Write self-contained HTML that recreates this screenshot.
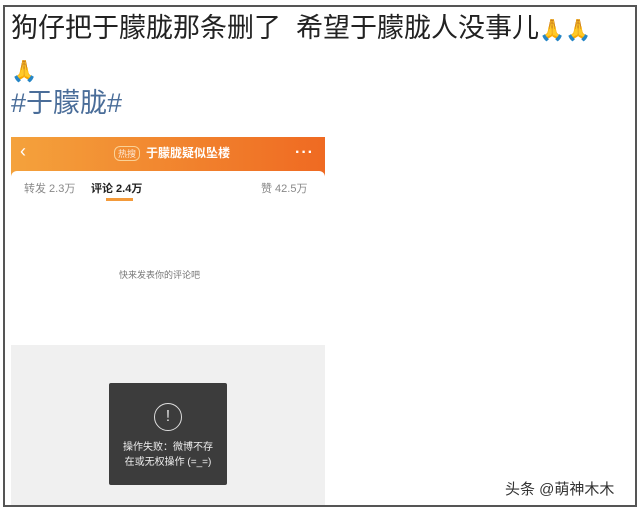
<!DOCTYPE html>
<html><head><meta charset="utf-8"><style>
body{margin:0;width:640px;height:510px;background:#fff;position:relative;overflow:hidden;font-family:"Liberation Sans","Noto Sans CJK SC",sans-serif}
.frame{position:absolute;left:3px;top:5px;width:630px;height:498px;border:2px solid #555;}
.t{position:absolute;left:11px;font-size:27px;color:#222;white-space:nowrap;line-height:30px}
.e{font-size:21px}
.a{position:absolute;font-size:11px;white-space:nowrap}
</style></head><body>
<div class="frame"></div>
<div class="t" style="top:13px">狗仔把于朦胧那条删了&nbsp;&nbsp;希望于朦胧人没事儿<span class="e">🙏🙏</span></div>
<div class="t" style="top:57px;font-size:21px">🙏</div>
<div class="t" style="top:88px;color:#4a6d99">#于朦胧#</div>
<div style="position:absolute;left:11px;top:137px;width:314px;height:40px;background:linear-gradient(90deg,#f4a23c,#ef6a22)"></div>
<div style="position:absolute;left:11px;top:171px;width:314px;height:174px;background:#fff;border-radius:6px 6px 0 0"></div>
<div class="a" style="left:20px;top:141px;color:#fff;font-size:18px">‹</div>
<div class="a" style="left:114px;top:146px;color:#fff;font-size:9px;border:1px solid #fde3b0;border-radius:6px;padding:0 3px;opacity:.8">热搜</div>
<div class="a" style="left:146px;top:144px;color:#fff;font-size:12px;font-weight:bold">于朦胧疑似坠楼</div>
<div class="a" style="left:295px;top:144px;color:#fff;font-size:16px;font-weight:bold;letter-spacing:1px">···</div>
<div class="a" style="left:24px;top:180px;color:#888">转发 2.3万</div>
<div class="a" style="left:91px;top:180px;color:#222;font-weight:bold">评论 2.4万</div>
<div class="a" style="left:261px;top:180px;color:#888">赞 42.5万</div>
<div style="position:absolute;left:106px;top:198px;width:27px;height:3px;background:#f39a3a"></div>
<div class="a" style="left:119px;top:268px;color:#777;font-size:9px">快来发表你的评论吧</div>
<div style="position:absolute;left:11px;top:345px;width:314px;height:160px;background:#f0f0f0"></div>
<div style="position:absolute;left:109px;top:383px;width:118px;height:102px;background:#3c3c3c;border-radius:2px"></div>
<div style="position:absolute;left:154px;top:403px;width:26px;height:26px;border:1px solid #ddd;border-radius:50%;color:#ddd;font-size:16px;text-align:center;line-height:26px">!</div>
<div class="a" style="left:116px;top:440px;width:104px;text-align:center;color:#eee;font-size:10px;line-height:15px">操作失败：微博不存<br>在或无权操作 (=_=)</div>
<div class="a" style="left:505px;top:478px;color:#333;font-size:15px">头条 @萌神木木</div>
</body></html>
